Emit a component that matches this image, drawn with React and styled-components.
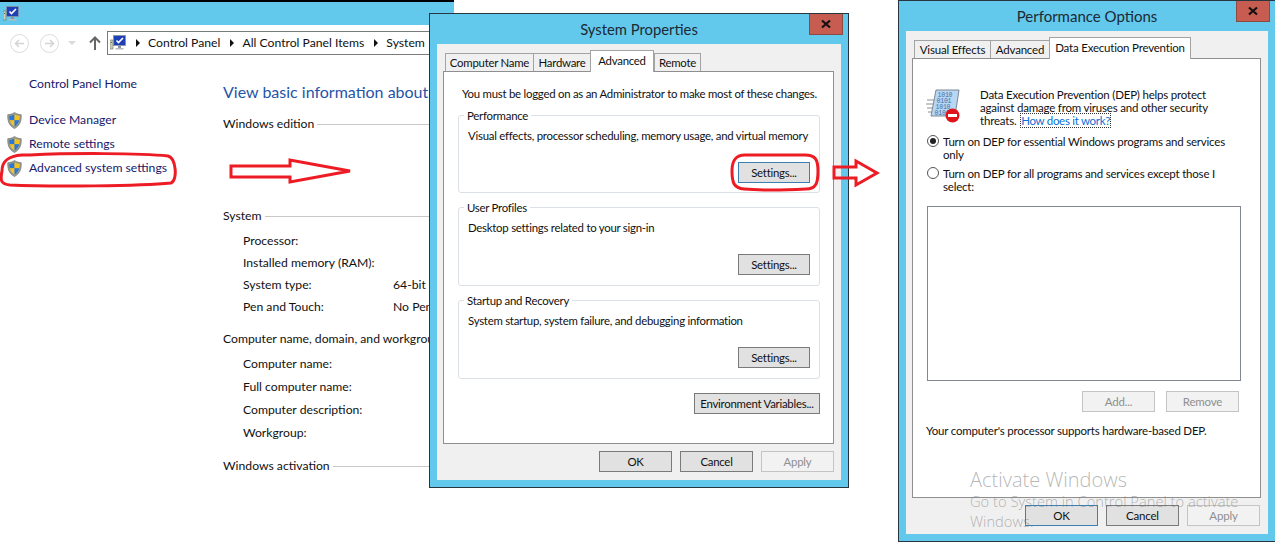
import React from "react"
import styled, { createGlobalStyle } from "styled-components"

const GlobalStyle = createGlobalStyle`
  html, body { margin:0; padding:0; background:#fff; overflow:hidden; }
  #root { width:1275px; height:542px; overflow:hidden; }
  * { box-sizing:border-box; }
`

const Desktop = styled.div`
  position:relative;
  width:1275px;
  height:542px;
  overflow:hidden;
  font:12px/16px Lato, sans-serif;
  color:#111;
  background:#fff;
`

//{{{ Explorer
const Explorer = styled.section`
  position:absolute;
  left:0;
  top:0;
  width:454px;
  height:500px;
  overflow:hidden;
  background:#fff;
  font-size:12.2px;
`
const ExplorerTitle = styled.div`
  height:25px;
  background:#62c8ec;
  border-top:2px solid #000;
  padding:4px 0 0 3px;
`
const NavBar = styled.div`
  display:flex;
  align-items:center;
  height:24px;
  margin-top:6px;
  padding-left:10px;
`
const NavButton = styled.svg`
  flex:none;
  margin-right:${p => p.$gap}px;
`
const Breadcrumb = styled.div`
  display:flex;
  align-items:center;
  width:400px;
  height:24px;
  margin-left:6px;
  padding-left:2px;
  border:1px solid #7b7b7b;
  white-space:nowrap;
`
const Caret = styled.i`
  flex:none;
  width:0;
  height:0;
  margin:0 8px 0 10px;
  border-left:4px solid #111;
  border-top:4px solid transparent;
  border-bottom:4px solid transparent;
`
const ExplorerBody = styled.div`
  display:grid;
  grid-template-columns:223px 1fr;
`
const Sidebar = styled.nav`
  display:flex;
  flex-direction:column;
  padding:17px 0 0 7px;
`
const SideLink = styled.a`
  display:flex;
  align-items:center;
  gap:7px;
  height:24px;
  margin-bottom:${p => p.$after || 0}px;
  padding-left:${p => p.$indent || 0}px;
  color:#17176b;
  white-space:nowrap;
`
const Main = styled.div`
  padding-top:26px;
  white-space:nowrap;
`
const Heading = styled.h1`
  margin:0 0 13px;
  font:400 16px/22px Lato, sans-serif;
  color:#1f54a8;
`
const SectionTitle = styled.div`
  display:flex;
  align-items:center;
  gap:3px;
  height:16px;
  margin-top:${p => p.$top}px;
  &::after {
    content:"";
    flex:1;
    height:1px;
    background:#c8c8c8;
  }
`
const InfoList = styled.dl`
  display:grid;
  grid-template-columns:150px 1fr;
  grid-auto-rows:${p => p.$step}px;
  align-items:center;
  margin:${p => p.$top}px 0 0 20px;
`
const InfoLabel = styled.dt`
  margin:0;
`
const InfoValue = styled.dd`
  margin:0;
`
//}}}

//{{{ Dialog chrome
const Dialog = styled.section`
  position:absolute;
  left:${p => p.$x}px;
  top:${p => p.$y}px;
  width:${p => p.$w}px;
  height:${p => p.$h}px;
  display:flex;
  flex-direction:column;
  padding:0 7px 7px;
  background:#62c8ec;
  border:1px solid #27353f;
  font-size:${p => p.$font}px;
  letter-spacing:${p => p.$spacing}px;
`
const DialogTitle = styled.header`
  flex:none;
  height:30px;
  text-align:center;
  font-size:${p => p.$size}px;
  line-height:30px;
  letter-spacing:0;
  color:#1c2a33;
`
const CloseButton = styled.div`
  position:absolute;
  top:0;
  right:5px;
  width:34px;
  height:21px;
  display:flex;
  align-items:center;
  justify-content:center;
  background:#c75c50;
  border:1px solid #8e4a42;
  border-top:none;
`
const Client = styled.div`
  flex:1;
  display:flex;
  flex-direction:column;
  min-height:0;
  padding:7px 7px 8px 6px;
  background:#f0f0f0;
`
const TabStrip = styled.div`
  flex:none;
  position:relative;
  z-index:1;
  display:flex;
  align-items:flex-end;
  height:20px;
  padding-left:2px;
`
const Tab = styled.div`
  width:${p => p.$w}px;
  height:${p => (p.$active ? 22 : 18)}px;
  margin-bottom:${p => (p.$active ? -1 : 0)}px;
  text-align:center;
  line-height:${p => (p.$active ? 19 : 18)}px;
  white-space:nowrap;
  background:${p => (p.$active ? "#fff" : "#f0f0f0")};
  border:1px solid #a3a3a3;
  border-bottom:none;
  margin-right:${p => (p.$active ? 0 : -1)}px;
`
const TabPanel = styled.div`
  flex:1;
  min-height:0;
  display:flex;
  flex-direction:column;
  background:#fff;
  border:1px solid #8f8f8f;
  padding:${p => p.$pad};
`
const Footer = styled.div`
  flex:none;
  display:flex;
  justify-content:flex-end;
  gap:8px;
  padding:7px ${p => p.$right}px 0 0;
`
const Button = styled.button`
  flex:none;
  width:${p => p.$w || 73}px;
  height:21px;
  margin:0;
  padding:0;
  font:inherit;
  line-height:17px;
  letter-spacing:inherit;
  color:${p => (p.$disabled ? "#8f8f8f" : "#111")};
  background:${p => (p.$disabled ? "#f2f2f2" : "#e1e1e1")};
  border:1px solid ${p => (p.$focus ? "#3c7fb1" : p.$disabled ? "#c4c4c4" : "#7a7a7a")};
  white-space:nowrap;
`
//}}}

//{{{ System Properties
const Note = styled.p`
  margin:0 0 6px 4px;
  line-height:16px;
  white-space:nowrap;
`
const Group = styled.fieldset`
  height:${p => p.$h || 86}px;
  margin:0 0 7px;
  padding:5px 9px 0 9px;
  border:1px solid #dbe0e6;
  border-radius:3px;
  min-width:0;
  display:flex;
  flex-direction:column;
`
const Legend = styled.legend`
  margin-left:-4px;
  padding:0 3px;
  line-height:15px;
`
const GroupText = styled.div`
  line-height:16px;
  white-space:nowrap;
`
const GroupAction = styled.div`
  display:flex;
  justify-content:flex-end;
  margin-top:${p => p.$top || 18}px;
`
//}}}

//{{{ Performance Options
const Intro = styled.div`
  display:flex;
  gap:20px;
  height:39px;
  margin:0 0 8px -1px;
`
const IntroText = styled.p`
  margin:0;
  line-height:13px;
`
const HelpLink = styled.a`
  margin-left:2px;
  color:#0a6fd6;
  outline:1px dotted #333;
  letter-spacing:-0.3px;
  text-decoration:none;
`
const RadioRow = styled.label`
  display:flex;
  gap:4px;
  height:26px;
  margin-bottom:6px;
  line-height:13px;
`
const Radio = styled.span`
  flex:none;
  width:12px;
  height:12px;
  display:flex;
  align-items:center;
  justify-content:center;
  background:#fff;
  border:1px solid #555;
  border-radius:50%;
  &::after {
    content:"";
    display:${p => (p.$on ? "block" : "none")};
    width:6px;
    height:6px;
    border-radius:50%;
    background:#222;
  }
`
const ExceptionList = styled.div`
  flex:none;
  width:314px;
  height:175px;
  margin-top:7px;
  background:#fff;
  border:1px solid #828790;
`
const ListActions = styled.div`
  display:flex;
  justify-content:flex-end;
  gap:11px;
  width:312px;
  margin-top:10px;
`
const Support = styled.p`
  margin:11px 0 0 -1px;
  line-height:16px;
  white-space:nowrap;
`
//}}}

const Watermark = styled.div`
  position:absolute;
  left:970px;
  top:468px;
  width:290px;
  color:rgba(120,120,120,.55);
  font:300 14.7px/19.5px "Open Sans", sans-serif;
`
const WatermarkTitle = styled.div`
  font-size:20px;
  line-height:24px;
`
const Annotations = styled.svg`
  position:absolute;
  left:0;
  top:0;
  pointer-events:none;
`

const MonitorIcon = () => (
  <svg width="16" height="16" viewBox="0 0 16 16" style={{ flex: "none" }}>
    <rect x="0" y="5" width="3" height="9" fill="#c9cdb8" stroke="#6b7460" strokeWidth=".6" />
    <rect x="1" y="7" width="1" height="1" fill="#4a7a3a" />
    <rect x="3.5" y="0.5" width="12" height="10" fill="#1f3fb8" stroke="#8a94a0" strokeWidth=".8" />
    <path d="M6.5 5.5l2 2 4.5-4.5" fill="none" stroke="#fff" strokeWidth="1.6" />
    <rect x="8" y="11" width="3" height="2" fill="#8d939a" />
    <rect x="5.5" y="13" width="8" height="1.5" fill="#b6babe" />
  </svg>
)

const ShieldIcon = () => (
  <svg width="15" height="17" viewBox="0 0 15 17" style={{ flex: "none" }}>
    <path d="M7.5.5C5.5 2 3 2.6.8 2.7c-.3 6 1 10.800 6.700 13.800 5.700-3 7-7.800 6.700-13.800C12 2.600 9.500 2 7.500.5z" fill="#9a9a96" stroke="#77776f" strokeWidth=".7" />
    <path d="M7.500 2.200C5.800 3.300 4 3.800 2.300 4c0 1.500.1 3 .5 4.300h4.700z" fill="#2a78d4" />
    <path d="M7.500 2.200c1.700 1.100 3.500 1.600 5.200 1.800 0 1.500-.1 3-.5 4.300H7.500z" fill="#f3c41d" />
    <path d="M2.800 8.300c.7 2.500 2.100 4.600 4.700 6.200V8.300z" fill="#f3c41d" />
    <path d="M12.200 8.300c-.7 2.500-2.100 4.600-4.700 6.200V8.300z" fill="#2a78d4" />
  </svg>
)

const CloseGlyph = () => (
  <svg width="10" height="10" viewBox="0 0 10 10">
    <path d="M1 1.500l8 7M9 1.500l-8 7" stroke="#111" strokeWidth="2.200" />
  </svg>
)

const DepIcon = () => (
  <svg width="34" height="34" viewBox="0 0 34 34" style={{ flex: "none", marginTop: 1 }}>
    <path d="M1 11h7M0 15h7M1 19h6M2 23h5" stroke="#8a8f96" strokeWidth="1" />
    <path d="M10 1h23l-4 26H5z" fill="#b9d6f2" stroke="#7b8794" strokeWidth="1" />
    <text x="11.500" y="8" fontSize="6.500" fill="#3c6ea8" fontFamily="Liberation Mono">1010</text>
    <text x="10.500" y="14" fontSize="6.500" fill="#3c6ea8" fontFamily="Liberation Mono">0101</text>
    <text x="9.500" y="20" fontSize="6.500" fill="#3c6ea8" fontFamily="Liberation Mono">1010</text>
    <text x="8.500" y="26" fontSize="6.500" fill="#3c6ea8" fontFamily="Liberation Mono">0101</text>
    <circle cx="26.500" cy="26.500" r="7" fill="#e0121c" />
    <rect x="22" y="25" width="9" height="3" fill="#fff" />
  </svg>
)

const systemRows = [
  ["Processor:", ""],
  ["Installed memory (RAM):", ""],
  ["System type:", "64-bit Operating System"],
  ["Pen and Touch:", "No Pen or Touch Input"],
]
const computerRows = ["Computer name:", "Full computer name:", "Computer description:", "Workgroup:"]

const ExplorerWindow = () => (
  <Explorer>
    <ExplorerTitle><MonitorIcon /></ExplorerTitle>
    <NavBar>
      <NavButton $gap={11} width="19" height="19" viewBox="0 0 19 19">
        <circle cx="9.500" cy="9.500" r="9" fill="none" stroke="#dcdcdc" />
        <path d="M14 9.500H6M9 6L5.500 9.500 9 13" fill="none" stroke="#d4d4d4" strokeWidth="1.500" />
      </NavButton>
      <NavButton $gap={8} width="19" height="19" viewBox="0 0 19 19">
        <circle cx="9.500" cy="9.500" r="9" fill="none" stroke="#dcdcdc" />
        <path d="M5 9.500h8M10 6l3.500 3.500L10 13" fill="none" stroke="#d4d4d4" strokeWidth="1.500" />
      </NavButton>
      <NavButton $gap={12} width="10" height="6" viewBox="0 0 10 6">
        <path d="M1 1l4 4 4-4z" fill="#dadada" />
      </NavButton>
      <NavButton $gap={0} width="12" height="14" viewBox="0 0 12 14">
        <path d="M6 14V2M1 6.500L6 1.500l5 5" fill="none" stroke="#666" strokeWidth="2" />
      </NavButton>
      <Breadcrumb>
        <MonitorIcon />
        <Caret />
        <span>Control Panel</span>
        <Caret />
        <span>All Control Panel Items</span>
        <Caret />
        <span>System</span>
      </Breadcrumb>
    </NavBar>
    <ExplorerBody>
      <Sidebar>
        <SideLink $indent={22} $after={12}>Control Panel Home</SideLink>
        <SideLink><ShieldIcon />Device Manager</SideLink>
        <SideLink><ShieldIcon />Remote settings</SideLink>
        <SideLink><ShieldIcon />Advanced system settings</SideLink>
      </Sidebar>
      <Main>
        <Heading>View basic information about your computer</Heading>
        <SectionTitle $top={0}>Windows edition</SectionTitle>
        <SectionTitle $top={76}>System</SectionTitle>
        <InfoList $step={22} $top={6}>
          {systemRows.map(([label, value]) => (
            <React.Fragment key={label}>
              <InfoLabel>{label}</InfoLabel>
              <InfoValue>{value}</InfoValue>
            </React.Fragment>
          ))}
        </InfoList>
        <SectionTitle $top={13}>Computer name, domain, and workgroup settings</SectionTitle>
        <InfoList $step={23} $top={5}>
          {computerRows.map(label => (
            <React.Fragment key={label}>
              <InfoLabel>{label}</InfoLabel>
              <InfoValue />
            </React.Fragment>
          ))}
        </InfoList>
        <SectionTitle $top={14}>Windows activation</SectionTitle>
      </Main>
    </ExplorerBody>
  </Explorer>
)

const SystemProperties = () => (
  <Dialog $x={429} $y={13} $w={420} $h={475} $font={11.4} $spacing={-0.25}>
    <DialogTitle $size={14.8}>System Properties</DialogTitle>
    <CloseButton><CloseGlyph /></CloseButton>
    <Client>
      <TabStrip>
        <Tab $w={89}>Computer Name</Tab>
        <Tab $w={58}>Hardware</Tab>
        <Tab $w={64} $active>Advanced</Tab>
        <Tab $w={47}>Remote</Tab>
      </TabStrip>
      <TabPanel $pad="14px 13px 0 14px">
        <Note>You must be logged on as an Administrator to make most of these changes.</Note>
        <Group $h={85}>
          <Legend>Performance</Legend>
          <GroupText>Visual effects, processor scheduling, memory usage, and virtual memory</GroupText>
          <GroupAction><Button $w={72} $focus>Settings...</Button></GroupAction>
        </Group>
        <Group>
          <Legend>User Profiles</Legend>
          <GroupText>Desktop settings related to your sign-in</GroupText>
          <GroupAction><Button $w={72}>Settings...</Button></GroupAction>
        </Group>
        <Group>
          <Legend>Startup and Recovery</Legend>
          <GroupText>System startup, system failure, and debugging information</GroupText>
          <GroupAction><Button $w={72}>Settings...</Button></GroupAction>
        </Group>
        <GroupAction $top={7}><Button $w={126}>Environment Variables...</Button></GroupAction>
      </TabPanel>
      <Footer $right={0}>
        <Button>OK</Button>
        <Button>Cancel</Button>
        <Button $disabled>Apply</Button>
      </Footer>
    </Client>
  </Dialog>
)

const PerformanceOptions = () => (
  <Dialog $x={898} $y={0} $w={378} $h={542} $font={11.5} $spacing={-0.2}>
    <DialogTitle $size={15}>Performance Options</DialogTitle>
    <CloseButton><CloseGlyph /></CloseButton>
    <Client>
      <TabStrip>
        <Tab $w={77}>Visual Effects</Tab>
        <Tab $w={60}>Advanced</Tab>
        <Tab $w={142} $active>Data Execution Prevention</Tab>
      </TabStrip>
      <TabPanel $pad="29px 13px 0 14px">
        <Intro>
          <DepIcon />
          <IntroText>
            Data Execution Prevention (DEP) helps protect<br />
            against damage from viruses and other security<br />
            threats. <HelpLink>How does it work?</HelpLink>
          </IntroText>
        </Intro>
        <RadioRow><Radio $on /><span>Turn on DEP for essential Windows programs and services<br />only</span></RadioRow>
        <RadioRow><Radio /><span>Turn on DEP for all programs and services except those I<br />select:</span></RadioRow>
        <ExceptionList />
        <ListActions>
          <Button $disabled>Add...</Button>
          <Button $disabled>Remove</Button>
        </ListActions>
        <Support>Your computer's processor supports hardware-based DEP.</Support>
      </TabPanel>
      <Footer $right={1}>
        <Button $focus>OK</Button>
        <Button>Cancel</Button>
        <Button $disabled>Apply</Button>
      </Footer>
    </Client>
  </Dialog>
)

export default function App() {
  return (
    <Desktop>
      <GlobalStyle />
      <ExplorerWindow />
      <SystemProperties />
      <PerformanceOptions />
      <Watermark>
        <WatermarkTitle>Activate Windows</WatermarkTitle>
        Go to System in Control Panel to activate Windows.
      </Watermark>
      <Annotations width="1275" height="542" fill="none" stroke="#ed1c24" strokeWidth="3">
        <path d="M30 155C70 153 140 153 168 156c8 2 10 24 3 27-30 3-120 4-161 2-9-1-10-4-8-14 0-10 6-15 20-16z" />
        <path d="M231 166h59v-6l60 11-60 11v-5h-59z" />
        <path d="M745 155h60c10 0 13 4 13 16 0 12-2 18-12 18-20 1-50 1-62 0-10-1-12-6-12-18 0-10 3-16 13-16z" />
        <path d="M834 167h22v-6l21 12-21 12v-7h-22z" />
      </Annotations>
    </Desktop>
  )
}
